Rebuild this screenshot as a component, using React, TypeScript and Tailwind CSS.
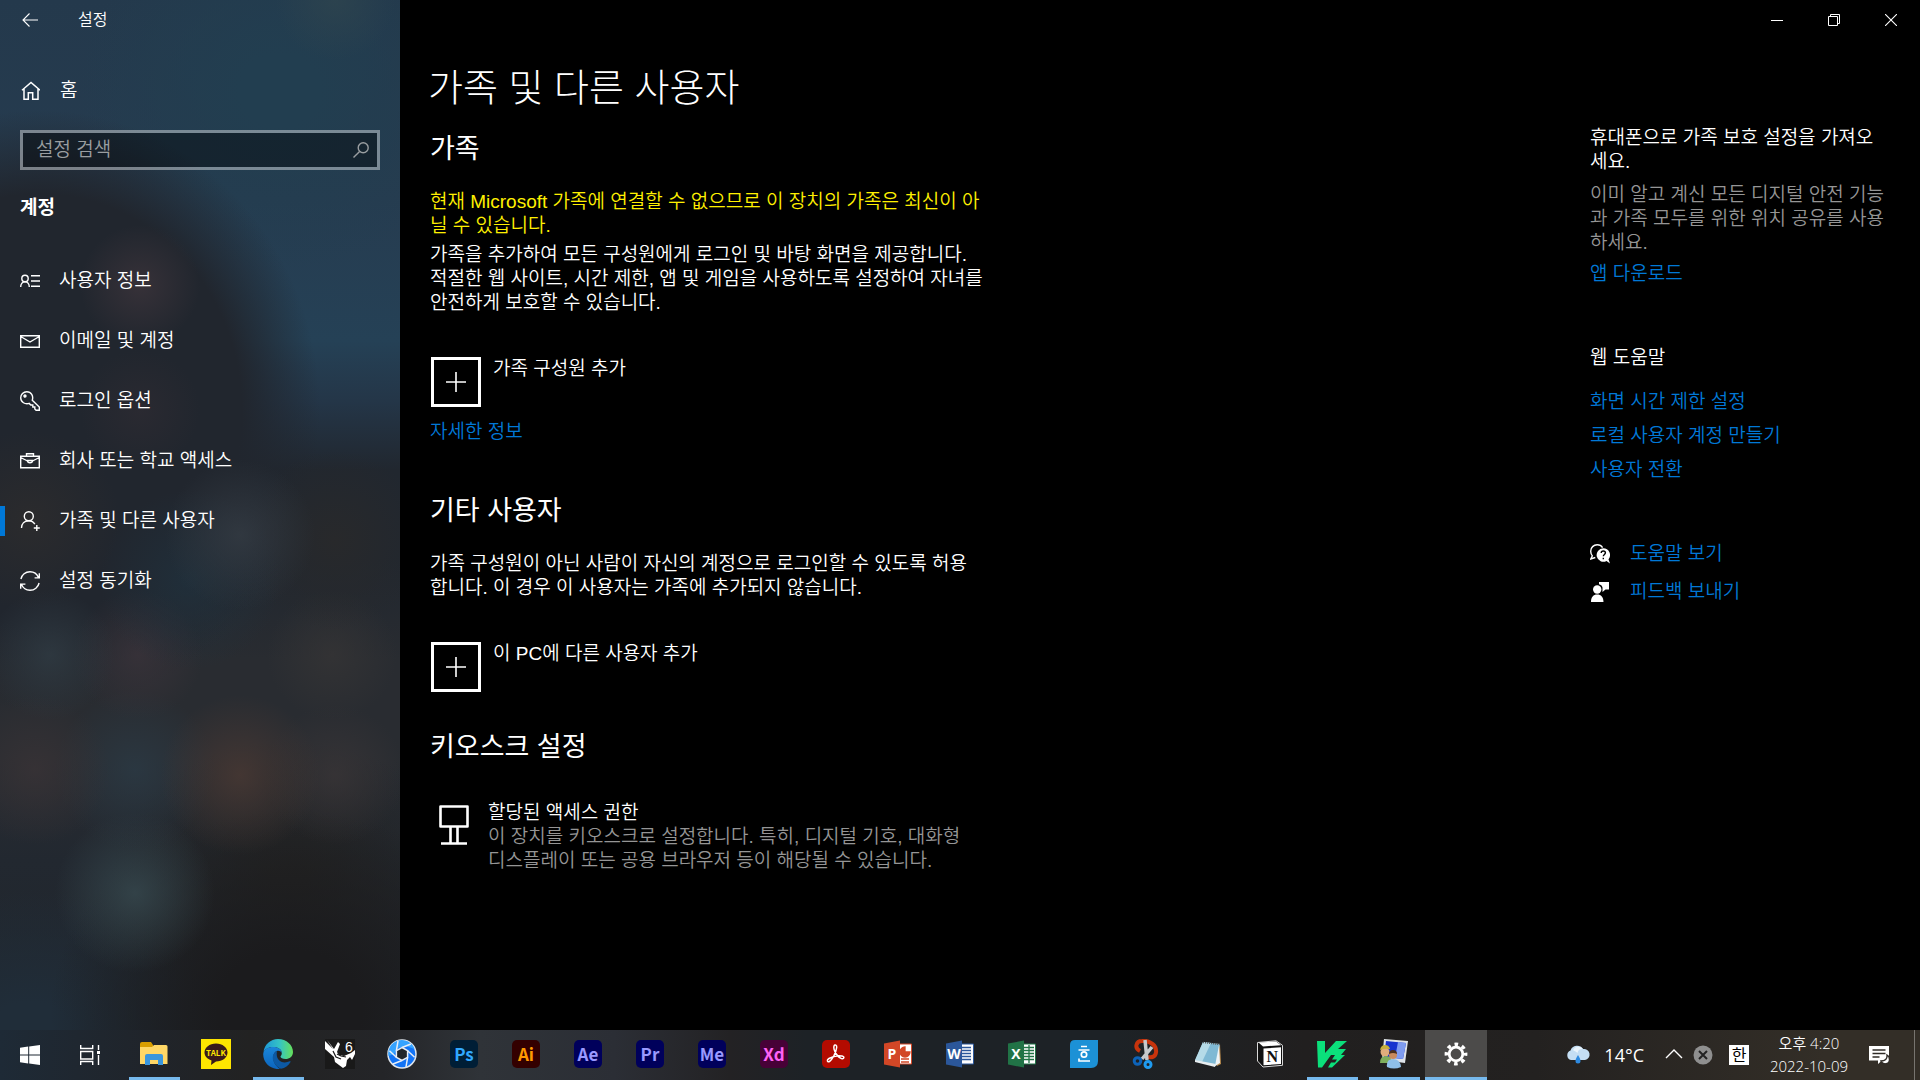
import React from "react";

type IconProps = { children: React.ReactNode; size?: string; box?: string };

const Icon: React.FC<IconProps> = ({ children, size = "size-5", box = "0 0 20 20" }) => (
    <svg viewBox={box} className={"shrink-0 " + size} fill="none" stroke="currentColor" strokeWidth="1.4" aria-hidden="true">
        {children}
    </svg>
);

const navItems = [
    {
        label: "사용자 정보",
        icon: (
            <>
                <circle cx="5" cy="7.5" r="3.2" />
                <path d="M.7 16c0-3 1.8-5.3 4.3-5.3S9.300 13 9.300 16M11 4.700h9M11 10h9M11 15.300h9" />
            </>
        ),
    },
    { label: "이메일 및 계정", icon: <path d="M.7 4.700h18.600v11.600H.7zM.7 5.500 10 11l9.300-5.500" /> },
    {
        label: "로그인 옵션",
        icon: (
            <>
                <path d="M12.300 9.200c1.300-4-1-8.500-5.500-8.500C3.400.7.7 3.400.7 6.700c0 4.600 4.500 7 8.500 5.700l1.600 1.600h2v2h2v2l1.300 1.300h3.200v-3.200z" />
                <circle cx="5" cy="5" r="1" fill="currentColor" />
            </>
        ),
    },
    {
        label: "회사 또는 학교 액세스",
        icon: (
            <>
                <path d="M.7 5.200h18.600v11.600H.7zM6.500 5V2.700h7V5M.7 6.500 7.500 10M19.300 6.500 12.500 10" />
                <path d="M7.500 9.500h5c0 3-5 3-5 0z" />
            </>
        ),
    },
    {
        label: "가족 및 다른 사용자",
        active: true,
        icon: (
            <>
                <circle cx="8.800" cy="5.200" r="4.500" />
                <path d="M1.500 17c0-4.500 3-7.300 7.300-7.300 2.700 0 4.800 1.300 6 3.500M16.800 14v6M13.800 17h6" />
            </>
        ),
    },
    {
        label: "설정 동기화",
        icon: <path d="M.9 8C1.800 3.800 5.500.8 10 .8c3.700 0 7 2.200 8.500 5.700M19.300 2.200v4.700h-4.700M19.100 12c-.9 4.200-4.600 7.200-9.100 7.200-3.700 0-7-2.200-8.500-5.700M.7 17.800v-4.700h4.700" />,
    },
];

// blurred desktop shining through the acrylic pane
const sidebarGlow = [
    "radial-gradient(circle at 335px 0px, #2e444ecc 0, #2e444e00 60px)",
    "radial-gradient(circle at 140px 285px, #3c343bcc 0, #3c343b00 60px)",
    "radial-gradient(circle at 140px 410px, #302c3399 0, #302c3300 60px)",
    "radial-gradient(circle at 240px 535px, #333a42dd 0, #333a4200 75px)",
    "radial-gradient(circle at 190px 580px, #203340aa 0, #20334000 90px)",
    "radial-gradient(circle at 30px 520px, #2b2b2d 0, #2b2b2d00 90px)",
    "radial-gradient(circle at 335px 540px, #28292b 0, #28292b00 90px)",
    "radial-gradient(circle at 50px 655px, #303b43cc 0, #303b4300 65px)",
    "radial-gradient(circle at 138px 655px, #3a333acc 0, #3a333a00 65px)",
    "radial-gradient(circle at 332px 655px, #353435cc 0, #35343500 65px)",
    "radial-gradient(circle at 240px 775px, #453733ee 0, #45373300 80px)",
    "radial-gradient(circle at 335px 775px, #393537cc 0, #39353700 70px)",
    "radial-gradient(circle at 35px 770px, #393336cc 0, #39333600 75px)",
    "radial-gradient(circle at 135px 770px, #2b3a45cc 0, #2b3a4500 80px)",
    "radial-gradient(circle at 135px 893px, #34444aee 0, #34444a00 80px)",
    "radial-gradient(ellipse 240px 200px at 290px 1010px, #1b1b1d 30%, #1b1b1d00 100%)",
    "radial-gradient(ellipse 180px 140px at 290px 880px, #232323 10%, #23232300 100%)",
    "radial-gradient(ellipse 200px 140px at 30px 1030px, #202d39 20%, #202d3900 100%)",
    "radial-gradient(ellipse 280px 300px at 40px 410px, #21262e 72%, #21262e00 100%)",
    "radial-gradient(ellipse 200px 180px at 280px 90px, #223e50 20%, #223e5000 100%)",
    "linear-gradient(#24394c 0, #263c50 200px, #254156 340px, #243648 400px, #21272f 470px, #21272f 560px, #292c31 660px, #292c31 760px, #222830 860px, #20252b 100%)",
].join(",");

const Sidebar = () => (
    <aside className="w-[400px] shrink-0 bg-[#21272f] text-white" style={{ backgroundImage: sidebarGlow }}>
        <header className="flex h-10 items-center">
            <button aria-label="뒤로" className="flex h-10 w-[60px] items-center justify-center">
                <Icon size="size-4" box="0 0 16 16">
                    <path d="M7.500 1.500 1 8l6.500 6.500M1 8h15" strokeWidth="1.100" />
                </Icon>
            </button>
            <span className="ml-[18px] text-[16px] leading-6">설정</span>
        </header>
        <a href="#home" className="mt-[26px] flex h-[50px] items-center gap-5 pl-5">
            <Icon>
                <path d="M2 9.200 11 1.500l9 7.700M4 8v10.300h4.300v-6.500h4.400v6.500H18V8" strokeWidth="1.500" />
            </Icon>
            <span className="text-[19px] leading-6">홈</span>
        </a>
        <label className="mx-5 mt-[14px] flex h-10 items-center border-[3px] border-white/40 bg-black/40 bg-clip-padding pr-2 pl-[13px] text-[#9a9ea1]">
            <input aria-label="설정 검색" placeholder="설정 검색" className="min-w-0 flex-1 bg-transparent text-[19px] leading-6 outline-none placeholder:text-[#9a9ea1]" />
            <Icon size="size-4" box="0 0 16 16">
                <circle cx="10.200" cy="5.800" r="5" />
                <path d="M6.600 9.400.5 15.500" />
            </Icon>
        </label>
        <h2 className="mt-[26px] pl-5 text-[19px] leading-6 font-bold">계정</h2>
        <nav className="mt-[31px] flex flex-col">
            {navItems.map((item) => (
                <a key={item.label} href="#nav" className="flex h-[60px] items-center">
                    <span className={item.active ? "h-[30px] w-[5px] bg-[#0078d7]" : "w-[5px]"} />
                    <span className="ml-[15px] flex items-center gap-[19px]">
                        <Icon>{item.icon}</Icon>
                        <span className="text-[19px] leading-6">{item.label}</span>
                    </span>
                </a>
            ))}
        </nav>
    </aside>
);

const WindowControls = () => (
    <header className="flex h-10 justify-end pr-px">
        <button aria-label="최소화" className="flex w-[57px] items-center justify-center">
            <Icon size="size-3" box="0 0 12 12"><path d="M0 6.500h12" strokeWidth="1" /></Icon>
        </button>
        <button aria-label="이전 크기로 복원" className="flex w-[57px] items-center justify-center">
            <Icon size="size-3" box="0 0 12 12"><path d="M.5 2.500h9v9h-9zM2.500 2.500v-2h9v9h-2" strokeWidth="1" /></Icon>
        </button>
        <button aria-label="닫기" className="flex w-[57px] items-center justify-center">
            <Icon size="size-3" box="0 0 12 12"><path d="m0 0 12 12M12 0 0 12" strokeWidth="1.100" /></Icon>
        </button>
    </header>
);

const AddButton: React.FC<{ label: string }> = ({ label }) => (
    <button className="mt-[42px] ml-px flex items-start gap-3 text-left">
        <span className="flex size-[50px] items-center justify-center border-[3px] border-white">
            <Icon><path d="M10 0v20M0 10h20" strokeWidth="1.600" /></Icon>
        </span>
        <span>{label}</span>
    </button>
);

const Family = () => (
    <main className="w-[570px] text-[19px] leading-6">
        <h2 className="mt-[18px] text-[27px] leading-9 font-normal">가족</h2>
        <p className="mt-[23px] text-[#fff000]">
            현재 Microsoft 가족에 연결할 수 없으므로 이 장치의 가족은 최신이 아<br />닐 수 있습니다.
        </p>
        <p className="mt-[5px]">
            가족을 추가하여 모든 구성원에게 로그인 및 바탕 화면을 제공합니다.<br />
            적절한 웹 사이트, 시간 제한, 앱 및 게임을 사용하도록 설정하여 자녀를<br />
            안전하게 보호할 수 있습니다.
        </p>
        <AddButton label="가족 구성원 추가" />
        <a href="#more" className="mt-[13px] block text-[#0078d7]">자세한 정보</a>

        <h2 className="mt-[49px] text-[27px] leading-9 font-normal">기타 사용자</h2>
        <p className="mt-[23px]">
            가족 구성원이 아닌 사람이 자신의 계정으로 로그인할 수 있도록 허용<br />
            합니다. 이 경우 이 사용자는 가족에 추가되지 않습니다.
        </p>
        <AddButton label="이 PC에 다른 사용자 추가" />

        <h2 className="mt-[37px] text-[27px] leading-9 font-normal">키오스크 설정</h2>
        <button className="mt-9 flex items-start text-left">
            <span className="mt-1 flex w-[58px] pl-[9px]">
                <Icon size="h-10 w-[30px]" box="0 0 30 40">
                    <path d="M1.500 1.500h27v20h-27zM11.500 22v16M18.500 22v16M2 38.500h26" strokeWidth="2.600" strokeLinejoin="round" />
                </Icon>
            </span>
            <span>
                할당된 액세스 권한
                <span className="block text-[#959595]">
                    이 장치를 키오스크로 설정합니다. 특히, 디지털 기호, 대화형<br />
                    디스플레이 또는 공용 브라우저 등이 해당될 수 있습니다.
                </span>
            </span>
        </button>
    </main>
);

const HelpPanel = () => (
    <aside className="mt-[13px] w-[330px] text-[19px] leading-6">
        <h3>휴대폰으로 가족 보호 설정을 가져오<br />세요.</h3>
        <p className="mt-[9px] text-[#959595]">
            이미 알고 계신 모든 디지털 안전 기능<br />과 가족 모두를 위한 위치 공유를 사용<br />하세요.
        </p>
        <a href="#app" className="mt-[7px] block text-[#0078d7]">앱 다운로드</a>
        <h3 className="mt-[60px]">웹 도움말</h3>
        <div className="mt-5 flex flex-col gap-[10px] text-[#0078d7]">
            <a href="#time">화면 시간 제한 설정</a>
            <a href="#local">로컬 사용자 계정 만들기</a>
            <a href="#switch">사용자 전환</a>
        </div>
        <div className="mt-[60px] flex flex-col gap-[14px]">
            <a href="#help" className="flex items-center gap-5">
                <Icon>
                    <path d="M2.500 12C1.300 10.800.7 9 .7 7.300.7 3.500 3.600.8 7.200.8c2.300 0 4.300 1.100 5.400 2.800M2.500 11.500.8 15l4.500-1.500" />
                    <path d="M13.200 4.300a6.700 6.700 0 1 0 3.300 12.600l3.500 2.600-1.500-4.300A6.700 6.700 0 0 0 13.200 4.300z" fill="currentColor" stroke="none" />
                    <path d="M11.200 9c0-2.800 4.200-2.600 4.200-.2 0 1.700-2.100 1.700-2.100 3.500M13.300 13.700v1.500" stroke="#000" />
                </Icon>
                <span className="text-[#0078d7]">도움말 보기</span>
            </a>
            <a href="#feedback" className="flex items-center gap-5">
                <Icon>
                    <g fill="currentColor" stroke="none">
                        <circle cx="7.200" cy="7.500" r="4.200" />
                        <path d="M1 20c0-5 2.300-7.500 6.200-7.500s6.300 2.500 6.300 7.500zM9 0h10v7.500h-3.500L12.500 10V5.500C12 3.800 10.800 2.700 9 2.300z" />
                    </g>
                </Icon>
                <span className="text-[#0078d7]">피드백 보내기</span>
            </a>
        </div>
    </aside>
);

type TileProps = { text: string; tile: string };
const AdobeTile: React.FC<TileProps> = ({ text, tile }) => (
    <span className={"flex size-7 items-center justify-center rounded-[5px] font-['Noto_Sans_CJK_KR',sans-serif] text-[17px] leading-6 font-bold " + tile}>{text}</span>
);

const OfficeIcon: React.FC<{ letter: string; dark: string; sheet: React.ReactNode }> = ({ letter, dark, sheet }) => (
    <svg viewBox="0 0 28 28" className="size-7" aria-hidden="true">
        <path d="M14 4h13.500v20H14z" fill="#fff" stroke={dark} />
        {sheet}
        <path d="M0 3.500 16 .5v27l-16-3z" fill={dark} />
        <text x="8" y="19" textAnchor="middle" fill="#fff" fontSize="14" fontWeight="700">{letter}</text>
    </svg>
);

const apps: { name: string; state?: "open" | "active"; icon: React.ReactNode }[] = [
    {
        name: "파일 탐색기",
        state: "open",
        icon: (
            <svg viewBox="0 0 30 30" className="size-[30px]">
                <path d="M1 5q0-2 2-2h9l2 3v4H1z" fill="#d99e00" />
                <path d="M1 8h12l2-2h12q1.500 0 1.500 1.500V25H1z" fill="#ffd766" />
                <path d="M6 26V17q0-2 2-2h14q2 0 2 2v9h-5v-5h-8v5z" fill="#3a96dd" />
            </svg>
        ),
    },
    {
        name: "카카오톡",
        icon: (
            <svg viewBox="0 0 30 30" className="size-[30px]">
                <path d="M0 0h30v30H0z" fill="#fee500" />
                <path d="M15 4.500c6.500 0 11.500 4 11.500 9s-5 9-11.500 9L10 26l.5-4.500C6.200 20 3.500 17 3.500 13.500c0-5 5-9 11.500-9z" fill="#391b1b" />
                <text x="15" y="16.500" textAnchor="middle" fill="#fee500" fontSize="8" fontWeight="700" className="font-['Noto_Sans_CJK_KR',sans-serif]">TALK</text>
            </svg>
        ),
    },
    {
        name: "Edge",
        state: "open",
        icon: (
            <svg viewBox="0 0 30 30" className="size-[30px]">
                <defs>
                    <linearGradient id="edgeTop" x1="0" x2="1">
                        <stop offset="0" stopColor="#1c96d8" />
                        <stop offset=".55" stopColor="#35c4c4" />
                        <stop offset="1" stopColor="#66e05a" />
                    </linearGradient>
                    <linearGradient id="edgeBody" x1="0" x2="0" y1="0" y2="1">
                        <stop offset="0" stopColor="#1b86d9" />
                        <stop offset="1" stopColor="#0b64bd" />
                    </linearGradient>
                </defs>
                <path d="M.5 13C1.500 5.500 7.500 0 15 0c8.500 0 15 6 15 13 0 4.500-3.500 7-7.500 7-3 0-5-1-5-2.200 0-1 1.300-1.500 1.300-3.800C18.800 10.500 15 8 10.500 8 6 8 2 10 .5 13z" fill="url(#edgeTop)" />
                <path d="M.2 15C.5 10.500 5 8 10.500 8c4.500 0 8.300 2.500 8.300 6-1-1.800-3-2.500-4.800-2-5 1.500-6 12 3 18C8 31 0 24 .2 15z" fill="url(#edgeBody)" />
                <path d="M14 12c-7 3-5 14 4 17.700 4-.7 7.500-3 9.500-6.700.3-.6-.2-1-.8-.7C20 25.500 12 22 14 12z" fill="#0c59a4" />
            </svg>
        ),
    },
    {
        name: "Rhino 6",
        icon: (
            <svg viewBox="0 0 30 30" className="size-[30px] overflow-visible">
                <path d="M0 0h30v30H0z" fill="#191919" />
                <path d="M0 2v8l9 8 1 5 8 6 3-2 1-6 3-3 2 3 3-6v-4l-4 3-7 3-5-1-2-3 3-8-2-2-4 7L2 1l6 9z" fill="#fff" />
                <path d="m8 12 3 6 5 2M12 15l4 2 5 1" stroke="#191919" strokeWidth="1.200" fill="none" />
                <text x="24" y="13" textAnchor="middle" fill="#fff" fontSize="14" className="font-['Liberation_Sans',sans-serif]">6</text>
            </svg>
        ),
    },
    {
        name: "뷰어",
        icon: (
            <svg viewBox="0 0 30 30" className="size-[30px]">
                <circle cx="15" cy="15" r="14" fill="#1273f5" stroke="#dfe5ec" strokeWidth="1.500" />
                <path d="M1.500 17a13.500 13.500 0 0 1 26-7L19 7l-8 2-4 6z" fill="#35a3ff" />
                <path d="m15 8.500 5.600 3.200v6.600L15 21.500l-5.600-3.200v-6.600z" fill="#22262b" stroke="#e9eef5" strokeWidth="1.500" />
                <path d="M15 8.500 24 5M20.600 11.700l7 6.500M20.600 18.300 19 28M15 21.500 6 25M9.400 18.300l-7-6.500M9.400 11.700 11 2" stroke="#e9eef5" strokeWidth="1.500" />
            </svg>
        ),
    },
    { name: "Photoshop", icon: <AdobeTile text="Ps" tile="bg-[#001e36] text-[#31a8ff]" /> },
    { name: "Illustrator", icon: <AdobeTile text="Ai" tile="bg-[#330000] text-[#ff9a00]" /> },
    { name: "After Effects", icon: <AdobeTile text="Ae" tile="bg-[#00005b] text-[#9999ff]" /> },
    { name: "Premiere Pro", icon: <AdobeTile text="Pr" tile="bg-[#00005b] text-[#9999ff]" /> },
    { name: "Media Encoder", icon: <AdobeTile text="Me" tile="bg-[#00005b] text-[#9999ff]" /> },
    { name: "XD", icon: <AdobeTile text="Xd" tile="bg-[#470137] text-[#ff61f6]" /> },
    {
        name: "Acrobat",
        icon: (
            <svg viewBox="0 0 28 28" className="size-7">
                <rect width="28" height="28" rx="5" fill="#b30b00" />
                <path d="M12 6c1-2 3-.8 2.700 1.500C14 13 10 20 7.500 21.500 5 22.500 4.500 20 7 18.500c4-2.300 9-3.300 13-2.500 3 .8 2 3.300-.5 2.600C15.500 17.500 11 10 12 6z" fill="none" stroke="#fff" strokeWidth="1.500" />
            </svg>
        ),
    },
    {
        name: "PowerPoint",
        icon: <OfficeIcon letter="P" dark="#d24726" sheet={<path d="M21 7v5h5a5 5 0 1 1-5-5zM17 19h8M17 22h8" fill="#d24726" stroke="#d24726" strokeWidth="1.300" />} />,
    },
    {
        name: "Word",
        icon: <OfficeIcon letter="W" dark="#2b579a" sheet={<path d="M16 7.500h9M16 10.500h9M16 13.500h9M16 16.500h9M16 19.500h9" stroke="#2b579a" strokeWidth="1.400" />} />,
    },
    {
        name: "Excel",
        icon: <OfficeIcon letter="X" dark="#217346" sheet={<path d="M16 7.500h10M16 10.500h10M16 13.500h10M16 16.500h10M16 19.500h10M21 5v18" stroke="#217346" strokeWidth="1.300" />} />,
    },
    {
        name: "한글",
        icon: (
            <svg viewBox="0 0 28 28" className="size-7">
                <path d="M5 0h23v21q0 7-7 7H0V5q0-5 5-5z" fill="#1c91d6" />
                <path d="M11 6.500h6M8.500 10h11M9 18.500v2.500h11" stroke="#fff" strokeWidth="1.700" fill="none" />
                <circle cx="14" cy="14.500" r="2.700" stroke="#fff" strokeWidth="1.700" fill="none" />
            </svg>
        ),
    },
    {
        name: "캡처 도구",
        icon: (
            <svg viewBox="0 0 28 30" className="h-[30px] w-7" fill="none">
                <path d="M8 12C2 9 4 2 10 2c9-.5 15 5 14 11.500-.5 4-4 5.500-8 4.500" stroke="#c8340c" strokeWidth="4" />
                <path d="m13 1 2 20M20 8l-10 12" stroke="#c6c9cc" strokeWidth="3.500" />
                <circle cx="5.500" cy="22" r="3.300" stroke="#0d63b8" strokeWidth="3" />
                <circle cx="16" cy="25.500" r="3" stroke="#1f9bf0" strokeWidth="3" />
            </svg>
        ),
    },
    {
        name: "메모장",
        icon: (
            <svg viewBox="0 0 30 30" className="size-[30px]">
                <path d="m10 4 17 1 1 20-4 2z" fill="#b98a4d" />
                <path d="m10 3 17 2-4 22-21-5z" fill="#7fb9d4" />
                <path d="m10 3 8 1L9 23l-7-2z" fill="#b5dbe8" />
                <path d="m26 6 1 18-5 3z" fill="#eef3f5" />
                <path d="m2 21 21 4-1 3-20-5z" fill="#e7edf0" />
                <path d="m10 3.500 17 2" stroke="#555" strokeWidth="1.500" strokeDasharray="1 1" />
            </svg>
        ),
    },
    {
        name: "Notion",
        icon: (
            <svg viewBox="0 0 28 28" className="size-7">
                <path d="M1.500 2.500 20 .8l6.500 4.500v20L7 27l-5.500-6z" fill="#111" stroke="#d8d8d8" />
                <path d="M2.500 2.500 20 1.500l5 3.700L7 6.500z" fill="#fff" />
                <path d="M7.500 8.500 25 7.300V24L7.500 25.300z" fill="#fff" />
                <text x="16.200" y="22" textAnchor="middle" fill="#111" fontSize="16" fontWeight="700" className="font-['Liberation_Serif',serif]">N</text>
            </svg>
        ),
    },
    {
        name: "V3",
        state: "open",
        icon: (
            <svg viewBox="0 0 30 28" className="h-7 w-[30px]">
                <path d="M0 1h8v12L19 1h11l-9 8h8l-5 6h4L15 27.500h-4l3-5h4l2-3h-5l3-4.500h-4L5 27.500H1z" fill="#0be07b" />
            </svg>
        ),
    },
    {
        name: "사용자 계정",
        state: "open",
        icon: (
            <svg viewBox="0 0 30 30" className="size-[30px]">
                <path d="m5 0 24 2-3 22-23-3z" fill="#dfe3e8" />
                <path d="m7 2 20 2-3 16L5 18z" fill="#1733cf" />
                <path d="m19 3 8 1-3 16-8-1z" fill="#7f9cf0" />
                <circle cx="6" cy="13" r="4.500" fill="#e0ad7c" />
                <path d="M1 11q1-5 5-5t5 4q-5-1-10 1z" fill="#c8b03c" />
                <path d="M1 24q0-7 6-7t6 7z" fill="#7fae5c" />
                <circle cx="14" cy="16" r="4" fill="#c98b5d" />
                <path d="M10 15q0-4 4-4t4 4q-4-2-8 0z" fill="#4a2f1d" />
                <path d="M8 28q-1-8 6-8t8 8q-7 3-14 0z" fill="#8fc0ea" />
            </svg>
        ),
    },
    {
        name: "설정",
        state: "active",
        icon: (
            <svg viewBox="0 0 24 24" className="size-6" fill="none" stroke="#fff">
                <circle cx="12" cy="12" r="6.800" strokeWidth="2.800" />
                <circle cx="12" cy="12" r="9.700" strokeWidth="3.400" strokeDasharray="3.620 4" strokeDashoffset="1.800" />
            </svg>
        ),
    },
];

const Taskbar = () => (
    <footer className="flex h-[50px] shrink-0 bg-[linear-gradient(90deg,#1e2a36_0,#20242a_8%,#222222_13%,#242528_20%,#2f3338_25%,#2b2e35_32%,#232224_38%,#1d2226_42%,#1d2226_58%,#211f1f_68%,#232120_80%,#332e27_95%)] font-['Open_Sans','Noto_Sans_CJK_KR',sans-serif] text-white">
        <button aria-label="시작" className="flex w-[60px] items-center justify-center">
            <Icon>
                <path d="M0 2.700 8.200 1.500v8H0zM9.200 1.400 20 0v9.500H9.200zM0 10.500h8.200v8L0 17.300zM9.200 10.500H20V20L9.200 18.600z" fill="currentColor" stroke="none" />
            </Icon>
        </button>
        <button aria-label="작업 보기" className="mr-[3px] flex w-[60px] items-center justify-center">
            <Icon>
                <path d="M.7 0v3.500h12V0M.7 6.500h12v7.500H.7zM.7 20v-3.500h12V20M18.500 0v5M18.500 10v10" />
                <path d="M17 6h3v3h-3z" fill="currentColor" stroke="none" />
            </Icon>
        </button>
        {apps.map((app) => (
            <button key={app.name} aria-label={app.name} className={"flex w-[62px] flex-col items-center " + (app.state === "active" ? "bg-[#4c4b4a]" : "")}>
                <span className="flex flex-1 items-center pt-px">{app.icon}</span>
                <span className={"h-[3px] " + (app.state === "active" ? "w-full bg-[#76b9ed]" : app.state === "open" ? "w-[51px] bg-[#76b9ed]" : "w-[51px]")} />
            </button>
        ))}
        <div className="ml-auto flex items-center">
            <svg viewBox="0 0 26 20" className="h-5 w-[26px]" aria-hidden="true">
                <path d="M6 15a5 5 0 0 1-.5-9.500A7 7 0 0 1 18 4a5.500 5.500 0 0 1 2 11z" fill="#c4def4" />
                <path d="M8 5a6 6 0 0 1 10-1c-3-.5-5 1-5.500 4C11 6.500 9 6 8 5z" fill="#eaf5fd" />
                <path d="M13 10c1.500 2.500 2.500 4 2.500 6a2.500 2.500 0 0 1-5 0c0-2 1-3.500 2.500-6z" fill="#2e8ae0" />
            </svg>
            <span className="ml-[13px] text-[18px] leading-6 font-normal">14°C</span>
            <button aria-label="숨겨진 아이콘 표시" className="ml-5">
                <Icon><path d="m2 13 8-8 8 8" /></Icon>
            </button>
            <svg viewBox="0 0 20 20" className="ml-[9px] size-5" aria-hidden="true">
                <circle cx="10" cy="10" r="9.500" fill="#8f8f8f" />
                <path d="m6 6 8 8M14 6l-8 8" stroke="#222" strokeWidth="2" />
            </svg>
            <button className="ml-4 flex size-5 items-center justify-center bg-white text-[16px] leading-5 font-normal text-black">한</button>
            <div className="ml-5 w-[80px] text-center text-[15px] leading-[23px]">
                <div>오후 4:20</div>
                <div>2022-10-09</div>
            </div>
            <button aria-label="알림 센터" className="mr-[25px] ml-5">
                <Icon>
                    <path d="M0 1h20v14.500h-7L9 19v-3.500H0z" fill="currentColor" stroke="none" />
                    <path d="M3.500 5h13M3.500 8.500h13M3.500 12h7" stroke="#302c27" />
                    <path d="M18 10c.5 4-2 6-6 6 1.500 4 8.500 4 8.500-1.500 0-2-.8-3.500-2.500-4.500z" fill="#fff" stroke="#302c27" />
                </Icon>
            </button>
            <button aria-label="바탕 화면 보기" className="h-[50px] w-[6px] border-l border-[#77746f]" />
        </div>
    </footer>
);

const App = () => (
    <div className="flex min-h-screen flex-col bg-black font-['Liberation_Sans','Noto_Sans_CJK_KR',sans-serif] font-[350] text-white">
        <div className="flex flex-1">
            <Sidebar />
            <div className="flex-1">
                <WindowControls />
                <h1 className="mt-6 mb-px pl-7 text-[38px] leading-[48px] font-light">가족 및 다른 사용자</h1>
                <div className="flex justify-between pl-[30px]">
                    <Family />
                    <HelpPanel />
                </div>
            </div>
        </div>
        <Taskbar />
    </div>
);

export default App;
